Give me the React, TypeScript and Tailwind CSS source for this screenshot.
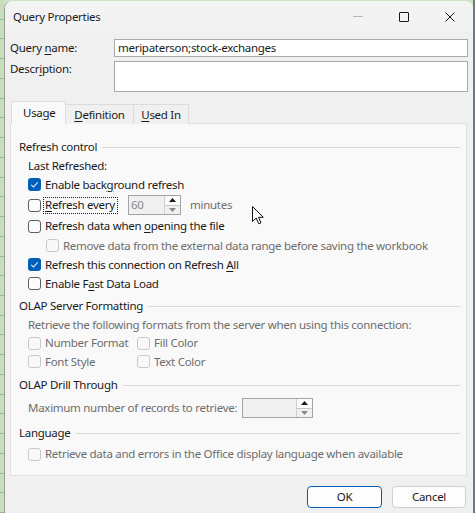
import React from "react";

const U = ({ children }: { children: React.ReactNode }) => (
  <span className="underline decoration-1 underline-offset-[2px]">{children}</span>
);

function Cb({ checked, disabled }: { checked?: boolean; disabled?: boolean }) {
  if (checked) {
    return (
      <div className="w-[13px] h-[13px] rounded-[3px] bg-[#005fb8] flex items-center justify-center shrink-0">
        <svg width="13" height="13" viewBox="0 0 13 13">
          <path d="M3.2 6.8 L5.4 9 L9.8 4.4" stroke="#dbe9f7" strokeWidth="1.1" fill="none" />
        </svg>
      </div>
    );
  }
  return (
    <div
      className={
        "w-[13px] h-[13px] rounded-[3px] border shrink-0 " +
        (disabled ? "border-[#c9c9c9] bg-[#f9f9f9]" : "border-[#5f5f5f] bg-[#fcfcfc]")
      }
    />
  );
}

function Heading({ children, className = "" }: { children: React.ReactNode; className?: string }) {
  return (
    <div className={"flex items-center h-[20px] " + className}>
      <span className="text-[#1a1a1a]">{children}</span>
      <div className="flex-1 h-px bg-[#dadada] ml-[5px]" />
    </div>
  );
}

function Spinner() {
  return (
    <div className="w-[16px] flex flex-col border-l border-[#d0d0d0] bg-[#f0f0f0]">
      <div className="flex-1 flex items-center justify-center border-b border-[#c8c8c8] bg-[#fbfbfb]">
        <svg width="7" height="4" viewBox="0 0 7 4">
          <path d="M0 4 L3.5 0 L7 4 Z" fill="#1a1a1a" />
        </svg>
      </div>
      <div className="flex-1 flex items-center justify-center bg-[#f0f0f0]">
        <svg width="7" height="4" viewBox="0 0 7 4">
          <path d="M0 0 L3.5 4 L7 0 Z" fill="#8a8a8a" />
        </svg>
      </div>
    </div>
  );
}

export default function App() {
  return (
    <div className="w-[475px] h-[513px] relative overflow-hidden bg-[#cde3c1] font-['Noto_Sans',sans-serif] text-[11.5px] leading-[16px] tracking-[-0.28px] whitespace-nowrap text-[#1a1a1a]">
      <div className="absolute left-0 top-0 w-[4px] h-full flex flex-col">
        {Array.from({ length: 26 }).map((_, i) => (
          <div key={i} className="h-[20px] border-b border-[#8fbf80] bg-[#c8dfbb]" />
        ))}
      </div>
      <div className="absolute right-0 top-0 w-[2px] h-full bg-[#6b7a8a]" />
      <div className="ml-[4px] mt-[1px] w-[469px] h-[512px] rounded-t-[8px] bg-[#f0f0f0] border-l border-[#9a9a9a] flex flex-col">
        {/* title bar */}
        <div className="h-[31px] flex items-center bg-[#f3f3f3] rounded-t-[8px]">
          <div className="pl-[8px] flex-1 text-[#1a1a1a]">Query Properties</div>
          <div className="w-[46px] h-full flex items-center justify-center">
            <div className="w-[10px] h-px bg-[#b8b8b8]" />
          </div>
          <div className="w-[46px] h-full flex items-center justify-center">
            <div className="w-[10px] h-[10px] border border-[#1a1a1a] rounded-[1px]" />
          </div>
          <div className="w-[46px] h-full flex items-center justify-center">
            <svg width="10" height="10" viewBox="0 0 10 10">
              <path d="M0.5 0.5 L9.5 9.5 M9.5 0.5 L0.5 9.5" stroke="#1a1a1a" strokeWidth="1" />
            </svg>
          </div>
        </div>

        {/* query name */}
        <div className="mt-[7px] flex items-center h-[18px] pl-[5px] pr-[5px]">
          <div className="w-[104px]">
            Query <U>n</U>ame:
          </div>
          <div className="flex-1 h-[18px] border border-[#a9a9a9] bg-white flex items-center pl-[3px]">
            meripaterson;stock-exchanges
          </div>
        </div>
        <div className="mt-[4px] flex items-start h-[31px] pl-[5px] pr-[5px]">
          <div className="w-[104px] pt-[0px]">
            Descr<U>i</U>ption:
          </div>
          <div className="flex-1 h-[31px] border border-[#a9a9a9] bg-white" />
        </div>

        {/* tabs */}
        <div className="mt-[9px] ml-[6px] flex items-end h-[23px] relative z-10">
          <div className="w-[55px] h-[23px] border border-b-0 border-[#dcdcdc] bg-[#f9f9f9] rounded-t-[2px] flex items-center pl-[11px] pb-[1px]">
            Usa<U>g</U>e
          </div>
          <div className="w-[68px] h-[20px] border border-l-0 border-b-0 border-[#dcdcdc] bg-[#f0f0f0] flex items-center justify-center">
            <span>
              <U>D</U>efinition
            </span>
          </div>
          <div className="w-[55px] h-[20px] border border-l-0 border-b-0 border-[#dcdcdc] bg-[#f0f0f0] flex items-center justify-center">
            <span>
              <U>U</U>sed In
            </span>
          </div>
        </div>

        {/* panel */}
        <div className="-mt-px ml-[5px] w-[457px] h-[353px] border border-[#e1e1e1] bg-[#f9f9f9] pt-[13px] pl-[8px] pr-[6px]">
          <Heading>Refresh control</Heading>
          <div className="pl-[9px]">
            <div className="h-[18px] flex items-center">Last Refreshed:</div>
            <div className="h-[19px] flex items-center gap-[4px]">
              <Cb checked />
              <span>
                Enable back<U>g</U>round refresh
              </span>
            </div>
            <div className="h-[22px] flex items-center">
              <Cb />
              <div className="ml-[2px] w-[75px] h-[17px] border border-dotted border-[#222] flex items-center pl-[1px] shrink-0">
                <span>
                  <U>R</U>efresh every
                </span>
              </div>
              <div className="ml-[10px] w-[53px] h-[20px] border border-[#a4a4a4] bg-[#f0f0f0] flex shrink-0">
                <div className="flex-1 flex items-center pl-[2px] text-[#8a8a8a]">60</div>
                <Spinner />
              </div>
              <span className="ml-[9px] text-[#6d6d6d]">minutes</span>
            </div>
            <div className="h-[20px] flex items-center gap-[4px]">
              <Cb />
              <span>
                Refresh data when <U>o</U>pening the file
              </span>
            </div>
            <div className="h-[19px] flex items-center gap-[4px] pl-[18px]">
              <Cb disabled />
              <span className="text-[#6d6d6d]">
                Remove data from the external data range before saving the workbook
              </span>
            </div>
            <div className="h-[19px] flex items-center gap-[4px]">
              <Cb checked />
              <span>
                Refresh this connection on Refresh <U>A</U>ll
              </span>
            </div>
            <div className="h-[19px] flex items-center gap-[4px]">
              <Cb />
              <span>
                Enable F<U>a</U>st Data Load
              </span>
            </div>
          </div>

          <Heading className="mt-[3px]">OLAP Server Formatting</Heading>
          <div className="pl-[9px] text-[#6d6d6d]">
            <div className="h-[18px] flex items-center">
              Retrieve the following formats from the server when using this connection:
            </div>
            <div className="h-[18px] flex items-center">
              <div className="w-[109px] flex items-center gap-[4px]">
                <Cb disabled />
                <span>Number Format</span>
              </div>
              <div className="flex items-center gap-[4px]">
                <Cb disabled />
                <span>Fill Color</span>
              </div>
            </div>
            <div className="h-[19px] flex items-center">
              <div className="w-[109px] flex items-center gap-[4px]">
                <Cb disabled />
                <span>Font Style</span>
              </div>
              <div className="flex items-center gap-[4px]">
                <Cb disabled />
                <span>Text Color</span>
              </div>
            </div>
          </div>

          <Heading className="mt-[4px]">OLAP Drill Through</Heading>
          <div className="pl-[9px] mt-[3px] h-[20px] flex items-center text-[#6d6d6d]">
            <div className="w-[214px] shrink-0">Maximum number of records to retrieve:</div>
            <div className="w-[71px] h-[20px] border border-[#a4a4a4] bg-[#f0f0f0] flex shrink-0">
              <div className="flex-1" />
              <Spinner />
            </div>
          </div>

          <Heading className="mt-[5px]">Language</Heading>
          <div className="pl-[9px] mt-[1px] h-[20px] flex items-center gap-[4px] text-[#6d6d6d]">
            <Cb disabled />
            <span>Retrieve data and errors in the Office display language when available</span>
          </div>
        </div>

        {/* buttons */}
        <div className="mt-[10px] flex justify-end gap-[10px] pr-[7px]">
          <div className="w-[75px] h-[22px] rounded-[4px] border border-[#005fb8] bg-[#fdfdfd] flex items-center justify-center">
            OK
          </div>
          <div className="w-[74px] h-[22px] rounded-[4px] border border-[#d0d0d0] bg-[#fdfdfd] flex items-center justify-center">
            Cancel
          </div>
        </div>
      </div>

      {/* mouse cursor */}
      <svg className="absolute left-[252px] top-[206px]" width="13" height="20" viewBox="0 0 13 20">
        <path
          d="M0.5 0.5 L0.5 15.5 L4.2 12 L6.8 17.8 L9 16.8 L6.5 11.3 L11.3 11.3 Z"
          fill="white"
          stroke="#111"
          strokeWidth="1"
          strokeLinejoin="round"
        />
      </svg>
    </div>
  );
}
